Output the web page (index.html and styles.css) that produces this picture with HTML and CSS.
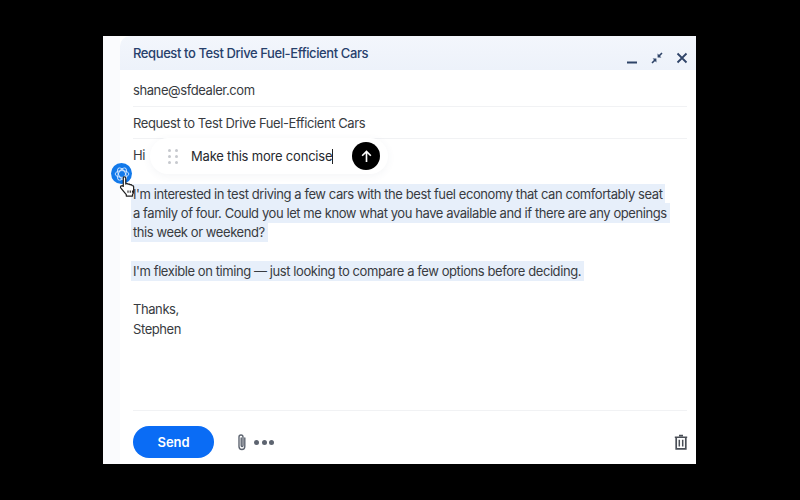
FILE: index.html
```html
<!DOCTYPE html>
<html lang="en">
<head>
    <meta charset="UTF-8">
    <meta name="viewport" content="width=device-width, initial-scale=1.0">
    <title>Compose</title>
    <link rel="stylesheet" href="styles.css">
</head>
<body>
    <div class="window">
        <div class="gutter"></div>
        <main class="compose">
            <header class="title-bar">
                <h1>Request to Test Drive Fuel-Efficient Cars</h1>
                <div class="window-btns">
                    <svg width="12" height="12" viewBox="0 0 12 12"><path d="M1 10.500h10" stroke="#2f4468" stroke-width="2"/></svg>
                    <svg width="12" height="12" viewBox="0 0 12 12"><path d="M11 1 7.500 4.500M1 11l3.500-3.500" stroke="#2f4468" stroke-width="1.600"/><path d="M6.600 1.600v3.800h3.800zM5.400 10.400V6.600H1.600z" fill="#2f4468"/></svg>
                    <svg width="12" height="12" viewBox="0 0 12 12"><path d="M1.500 1.500l9 9M10.500 1.500l-9 9" stroke="#2f4468" stroke-width="1.800"/></svg>
                </div>
            </header>
            <div class="field">shane@sfdealer.com</div>
            <div class="field">Request to Test Drive Fuel-Efficient Cars</div>
            <div class="message">
                <p>Hi</p>
                <p><span class="sel">I'm interested in test driving a few cars with the best fuel economy that can comfortably seat<br>a family of four. Could you let me know what you have available and if there are any openings<br>this week or weekend?</span></p>
                <p><span class="sel">I'm flexible on timing — just looking to compare a few options before deciding.</span></p>
                <p>Thanks,<br>Stephen</p>
            </div>
            <footer class="actions">
                <button class="send">Send</button>
                <svg class="clip" width="12" height="18" viewBox="0 0 12 18"><path d="M8.800 5v8.600a2.900 2.900 0 0 1-5.800 0V4a2 2 0 0 1 4 0v8.600a.9.9 0 0 1-1.800 0V5" fill="none" stroke="#5d6470" stroke-width="1.400" stroke-linecap="round"/></svg>
                <div class="more"><i></i><i></i><i></i></div>
                <svg class="trash" width="14" height="16" viewBox="0 0 14 16"><path d="M5 1.500h4M.8 3.200h12.400" stroke="#4a4f57" stroke-width="1.600"/><path d="M2.200 3.600v11.200h9.600V3.600" fill="none" stroke="#4a4f57" stroke-width="1.700"/><path d="M5.300 5.800v6.600M8.700 5.800v6.600" stroke="#4a4f57" stroke-width="1.500"/></svg>
            </footer>
        </main>

        <!-- floating prompt over the message -->
        <div class="prompt">
            <div class="grip"><i></i><i></i><i></i><i></i><i></i><i></i></div>
            <span class="prompt-text">Make this more concise<span class="caret"></span></span>
            <div class="prompt-go">
                <svg width="13" height="13" viewBox="0 0 12 12"><path d="M6 11V1.500M2 5.300 6 1.300l4 4" fill="none" stroke="#fff" stroke-width="1.500"/></svg>
            </div>
        </div>
        <div class="ai-badge">
            <svg width="16" height="16" viewBox="0 0 16 16" fill="none" stroke="#d6e8ff" stroke-width="0.900"><ellipse cx="8" cy="8" rx="6.800" ry="3.400"/><ellipse cx="8" cy="8" rx="6.800" ry="3.400" transform="rotate(60 8 8)"/><ellipse cx="8" cy="8" rx="6.800" ry="3.400" transform="rotate(120 8 8)"/></svg>
        </div>
        <svg class="pointer" width="18" height="23" viewBox="0 0 16 20"><path d="M4 1.600c.9-.6 2 0 2 1v5.200l.6-.3c.7-.2 1.300.1 1.500.5.6-.3 1.400-.1 1.700.5.700-.3 1.500 0 1.800.7.700-.2 1.400.3 1.400 1.100v4.200c0 1.200-.5 2-1 2.700v1.300H6.500v-1.300L1.700 11.500c-.6-.8-.4-1.700.3-2 .6-.300 1.300-.1 1.800.4V2.900c0-.5 0-1 .2-1.300z" fill="#fff" stroke="#222" stroke-width="1.100" stroke-linejoin="round"/><path d="M8 13.500v2M10 13.500v2M12 13.500v2" stroke="#222"/></svg>
    </div>
</body>
</html>
```

FILE: styles.css
```css
* {
    margin: 0;
    padding: 0;
    box-sizing: border-box;
}

body {
    background-color: #000;
    font-family: 'Inter', sans-serif;
    color: #383b41;
    height: 500px;
    padding: 36px 104px 36px 103px;
    overflow: hidden;
}

.window {
    position: relative;
    display: flex;
    height: 428px;
    background-color: #fff;
}

.gutter {
    width: 17px;
    background-color: #fafbfd;
}

.compose {
    flex: 1;
    display: flex;
    flex-direction: column;
    min-width: 0;
}

.title-bar {
    height: 34px;
    display: flex;
    align-items: center;
    justify-content: space-between;
    padding: 0 8px 0 13px;
    background: linear-gradient(#f3f6fc, #edf2fa);
    border-top-left-radius: 10px;
}

.title-bar h1 {
    font-size: 13px;
    font-weight: 500;
    letter-spacing: -0.4px;
    color: #27406b;
    margin-top: -1px;
}

.window-btns {
    display: flex;
    gap: 13px;
    margin-top: 10px;
}

.field {
    margin: 0 9px 0 13px;
    height: 37px;
    display: flex;
    align-items: center;
    font-size: 13px;
    letter-spacing: -0.41px;
    border-bottom: 1px solid #f1f2f4;
    padding-top: 3px;
}

.field + .field {
    height: 32px;
    padding-top: 1px;
}

.message {
    flex: 1;
    padding: 7px 13px 0;
    font-size: 13px;
    letter-spacing: -0.42px;
    line-height: 19.3px;
}

.message p {
    margin-bottom: 19.3px;
}

.sel {
    background-color: #e7effa;
    padding: 2px 3px 2px 2px;
    margin-left: -2px;
    -webkit-box-decoration-break: clone;
    box-decoration-break: clone;
}

.actions {
    margin: 0 9px 0 13px;
    height: 54px;
    display: flex;
    align-items: center;
    border-top: 1px solid #f1f2f4;
    padding-top: 9px;
}

.send {
    width: 81px;
    height: 32px;
    border: 0;
    border-radius: 16px;
    background-color: #0a6cf5;
    color: #fff;
    font-family: inherit;
    font-size: 13px;
    font-weight: 600;
    letter-spacing: -0.1px;
}

.clip {
    margin-left: 22px;
}

.more {
    display: flex;
    gap: 2.500px;
    margin-left: 6px;
}

.more i {
    width: 5px;
    height: 5px;
    border-radius: 50%;
    background-color: #5d6470;
}

.trash {
    margin-left: auto;
    margin-right: -1px;
}

.prompt {
    position: absolute;
    left: 47px;
    top: 102px;
    width: 238px;
    height: 36px;
    display: flex;
    align-items: center;
    padding: 0 8px 0 18px;
    background-color: #fff;
    border-radius: 18px;
    box-shadow: 0 2px 8px rgba(60, 80, 120, 0.06);
}

.grip {
    display: grid;
    grid-template-columns: 3px 3px;
    gap: 3px 4px;
}

.grip i {
    width: 3px;
    height: 3px;
    border-radius: 50%;
    background-color: #c6c9ce;
}

.prompt-text {
    margin-left: 13px;
    font-size: 13px;
    letter-spacing: -0.2px;
    color: #26292e;
    white-space: nowrap;
}

.caret {
    display: inline-block;
    width: 1px;
    height: 15px;
    background-color: #222;
    vertical-align: -3px;
}

.prompt-go {
    margin-left: auto;
    width: 28px;
    height: 28px;
    border-radius: 50%;
    background-color: #000;
    display: flex;
    align-items: center;
    justify-content: center;
}

.ai-badge {
    position: absolute;
    left: 8px;
    top: 127px;
    width: 21px;
    height: 21px;
    border-radius: 50%;
    background-color: #1279ea;
    display: flex;
    align-items: center;
    justify-content: center;
}

.pointer {
    position: absolute;
    left: 16px;
    top: 139px;
}
```
